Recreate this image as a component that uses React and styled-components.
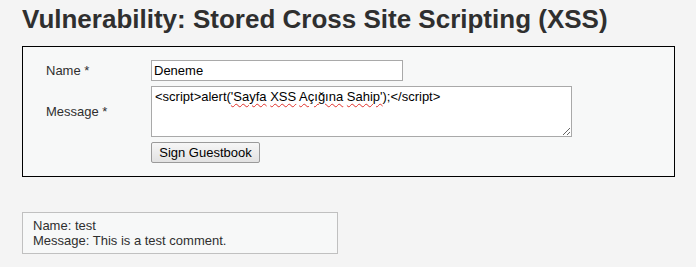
import React from 'react';
import styled, { createGlobalStyle } from 'styled-components';

const GlobalStyle = createGlobalStyle`
  body {
    margin: 0;
    background: #f4f4f4;
    color: #2f2f2f;
    font-family: "Liberation Sans", Arial, sans-serif;
    font-size: 13px;
  }
`;

const Page = styled.div`
  padding: 0 21px 0 22px;
`;

const Title = styled.h1`
  margin: 0;
  padding-top: 4px;
  height: 42px;
  font-size: 26px;
  line-height: 30px;
  font-weight: bold;
  color: #2f2f2f;
`;

const CodeArea = styled.div`
  box-sizing: border-box;
  height: 131px;
  padding: 13px 23px;
  border: 1px solid #000;
  background: #f7f8f8;
`;

const FormGrid = styled.form`
  display: grid;
  grid-template-columns: 105px 1fr;
  row-gap: 5px;
  align-items: center;
`;

const Label = styled.label`
  color: #2f2f2f;
  font-size: 13px;
`;

const TextInput = styled.input`
  box-sizing: border-box;
  width: 252px;
  height: 21px;
  margin: 0;
  padding: 1px 2px;
  border: 1px solid #a9a9a9;
  background: #fff;
  font-family: "Liberation Sans", Arial, sans-serif;
  font-size: 13px;
  color: #000;
  outline: none;
`;

const AreaWrap = styled.div`
  position: relative;
  width: 421px;
  height: 51px;
`;

const TextArea = styled.textarea`
  box-sizing: border-box;
  display: block;
  width: 421px;
  height: 51px;
  margin: 0;
  padding: 2px 3px;
  border: 1px solid #a9a9a9;
  background: #fff;
  font-family: "Liberation Sans", Arial, sans-serif;
  font-size: 13px;
  line-height: 15px;
  color: #000;
  outline: none;
`;

const SpellLayer = styled.div`
  position: absolute;
  top: 0;
  left: 0;
  padding: 3px 4px;
  font-family: "Liberation Sans", Arial, sans-serif;
  font-size: 13px;
  line-height: 15px;
  color: transparent;
  pointer-events: none;
  white-space: pre;
`;

const Misspelt = styled.span`
  text-decoration: underline wavy #e0302a;
  text-decoration-thickness: 1px;
  text-underline-offset: 2px;
`;

const Button = styled.button`
  grid-column: 2;
  justify-self: start;
  box-sizing: border-box;
  width: 109px;
  height: 21px;
  margin: 0;
  padding: 0 6px;
  border: 1px solid #9a9a9a;
  border-radius: 2px;
  background: linear-gradient(#f6f6f6, #e2e2e2);
  font-family: "Liberation Sans", Arial, sans-serif;
  font-size: 13px;
  color: #000;
`;

const Comments = styled.div`
  margin-top: 35px;
  box-sizing: border-box;
  width: 316px;
  padding: 5px 10px;
  border: 1px solid #c0c0c0;
  background: #f7f8f8;
  line-height: 15px;
  color: #2f2f2f;
`;

const App = () => {
  return (
    <Page>
      <GlobalStyle />
      <Title>Vulnerability: Stored Cross Site Scripting (XSS)</Title>
      <CodeArea>
        <FormGrid onSubmit={(e) => e.preventDefault()}>
          <Label htmlFor="txtName">Name *</Label>
          <TextInput id="txtName" defaultValue="Deneme" spellCheck={false} />
          <Label htmlFor="mtxMessage">Message *</Label>
          <AreaWrap>
            <TextArea
              id="mtxMessage"
              spellCheck={false}
              defaultValue={"<script>alert('Sayfa XSS Açığına Sahip');</script>"}
            />
            <SpellLayer aria-hidden="true">
              {"<script>alert("}
              <Misspelt>'Sayfa</Misspelt>
              {' '}
              <Misspelt>XSS</Misspelt>
              {' '}
              <Misspelt>Açığına</Misspelt>
              {' '}
              <Misspelt>Sahip'</Misspelt>
              {");</script>"}
            </SpellLayer>
          </AreaWrap>
          <Button type="submit">Sign Guestbook</Button>
        </FormGrid>
      </CodeArea>
      <Comments>
        Name: test<br />
        Message: This is a test comment.
      </Comments>
    </Page>
  );
};

export default App;
